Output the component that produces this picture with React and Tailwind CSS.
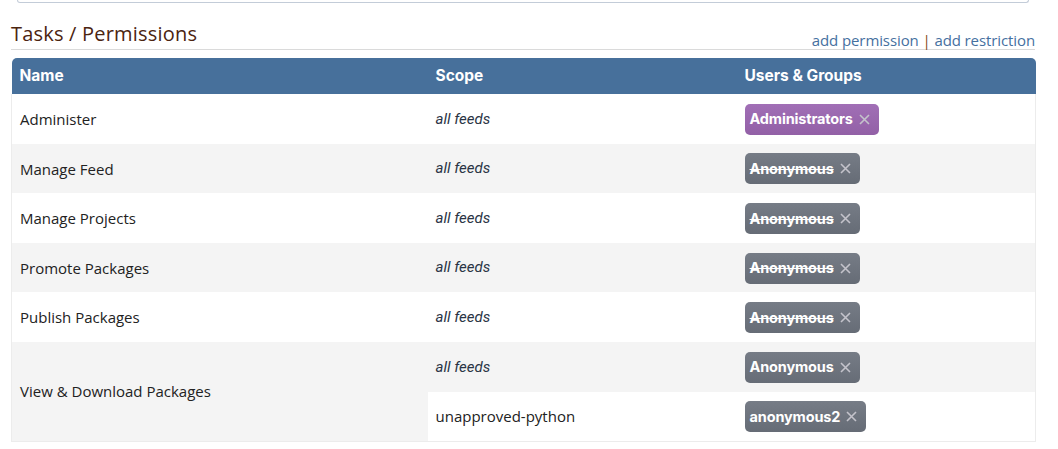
import React from "react";

const rows = [
  { name: "Administer", scopes: [{ scope: "all feeds", italic: true, badge: { text: "Administrators", kind: "purple" } }] },
  { name: "Manage Feed", scopes: [{ scope: "all feeds", italic: true, badge: { text: "Anonymous", kind: "gray", strike: true } }] },
  { name: "Manage Projects", scopes: [{ scope: "all feeds", italic: true, badge: { text: "Anonymous", kind: "gray", strike: true } }] },
  { name: "Promote Packages", scopes: [{ scope: "all feeds", italic: true, badge: { text: "Anonymous", kind: "gray", strike: true } }] },
  { name: "Publish Packages", scopes: [{ scope: "all feeds", italic: true, badge: { text: "Anonymous", kind: "gray", strike: true } }] },
];

function Badge({ text, kind, strike }) {
  const bg =
    kind === "purple"
      ? "bg-gradient-to-b from-[#a16fb6] to-[#9260a6]"
      : "bg-gradient-to-b from-[#767c86] to-[#666c76]";
  return (
    <span className={`inline-flex items-center h-[31px] rounded-[5px] pl-[5px] pr-[9px] ${bg} text-white font-bold text-[14.5px] tracking-[-0.15px]`} style={{ fontFamily: "Inter, 'Noto Sans', sans-serif" }}>
      <span className={strike ? "line-through" : ""}>{text}</span>
      <svg className="ml-[6px]" width="11" height="11" viewBox="0 0 11 11">
        <path d="M1 1 L10 10 M10 1 L1 10" stroke="#c4c3cb" strokeWidth="1.6" fill="none" />
      </svg>
    </span>
  );
}

const nameFont = { fontFamily: "'Open Sans', 'Noto Sans', sans-serif" };
const italicFont = { fontFamily: "Roboto, sans-serif" };

export default function App() {
  return (
    <div className="bg-white w-[1058px] h-[449px] overflow-hidden relative">
      <div className="mx-[17px] w-[1012px] h-[3px] border-b border-x border-[#c3ccd8] rounded-b-[4px]" />
      <div className="ml-[11px] w-[1024px] mt-[17px] flex items-end justify-between border-b border-[#dadada] pb-[1px]">
        <h2 className="text-[20px] text-[#4b2410] leading-[28px] tracking-[0.2px]" style={nameFont}>
          Tasks / Permissions
        </h2>
        <div className="text-[15px] text-[#45709f] leading-[18px] mb-[-1px] tracking-[-0.1px]" style={nameFont}>
          add permission <span className="text-[#8a4a1a]">|</span> add restriction
        </div>
      </div>
      <table className="ml-[11px] mt-[8px] w-[1024px] border-collapse table-fixed">
        <colgroup>
          <col className="w-[416px]" />
          <col className="w-[309px]" />
          <col className="w-[299px]" />
        </colgroup>
        <thead>
          <tr className="bg-[#47709b] h-[36px] text-white text-left text-[15.5px] font-bold" style={{ fontFamily: "Inter, sans-serif" }}>
            <th className="pl-[8px] rounded-tl-[5px]">Name</th>
            <th className="pl-[8px]">Scope</th>
            <th className="pl-[8px] rounded-tr-[5px]">Users &amp; Groups</th>
          </tr>
        </thead>
        <tbody className="border-x border-b border-[#ececec]">
          {rows.map((r, i) => (
            <tr key={r.name} className={`h-[49.6px] ${i % 2 === 1 ? "bg-[#f4f4f4]" : "bg-white"}`}>
              <td className="pl-[8px] pt-[1px] text-[15px] text-[#222]" style={nameFont}>{r.name}</td>
              <td className="pl-[8px] text-[15px] italic text-[#2a3445]" style={italicFont}>{r.scopes[0].scope}</td>
              <td className="pl-[8px] pt-[1px]"><Badge {...r.scopes[0].badge} /></td>
            </tr>
          ))}
          <tr className="h-[49.6px] bg-[#f4f4f4]">
            <td rowSpan={2} className="pl-[8px] text-[15px] text-[#222]" style={nameFont}>View &amp; Download Packages</td>
            <td className="pl-[8px] text-[15px] italic text-[#2a3445]" style={italicFont}>all feeds</td>
            <td className="pl-[8px] pt-[1px]"><Badge text="Anonymous" kind="gray" /></td>
          </tr>
          <tr className="h-[49.6px] bg-white">
            <td className="pl-[8px] text-[15px] text-[#222]" style={nameFont}>unapproved-python</td>
            <td className="pl-[8px] pt-[1px]"><Badge text="anonymous2" kind="gray" /></td>
          </tr>
        </tbody>
      </table>
    </div>
  );
}
